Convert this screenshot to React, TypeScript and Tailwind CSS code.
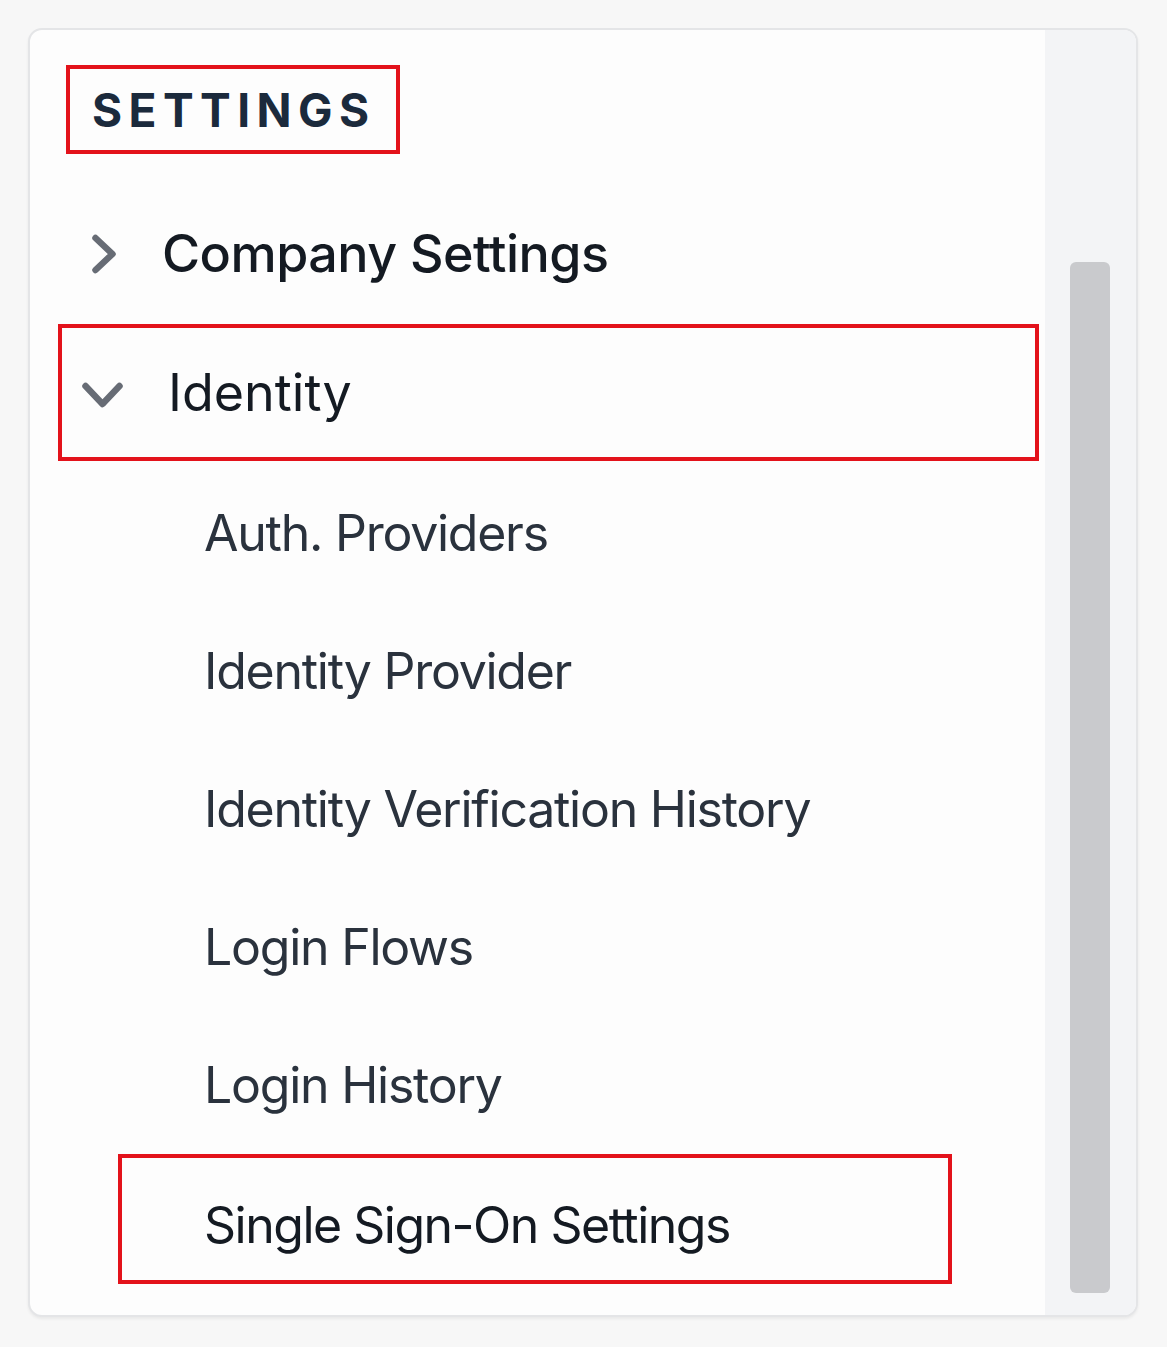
const subItems = [
  "Auth. Providers",
  "Identity Provider",
  "Identity Verification History",
  "Login Flows",
  "Login History",
];

function Chevron({ dir }: { dir: "right" | "down" }) {
  // thick rounded chevron, drawn on a 44x44 box
  const points =
    dir === "right" ? "15.5,6 32.5,22 15.5,38" : "5.5,15 22.5,33 39.5,15";
  return (
    <svg viewBox="0 0 44 44" className="h-[44px] w-[44px] shrink-0 text-[#676c75]">
      <polyline
        points={points}
        fill="none"
        stroke="currentColor"
        strokeWidth={6.5}
        strokeLinecap="round"
        strokeLinejoin="round"
      />
    </svg>
  );
}

export default function App() {
  return (
    <div
      className="min-h-screen bg-[#f7f7f7] pt-[28px] pl-[28px]"
      style={{ fontFamily: "Inter, 'Noto Sans', sans-serif" }}
    >
      <div className="flex h-[1289px] w-[1110px] overflow-hidden rounded-[14px] border-2 border-[#e4e5e7] bg-[#fdfdfd] shadow-[0_2px_3px_rgba(0,0,0,0.06)]">
        {/* nav column */}
        <div className="flex flex-1 flex-col pt-[35px]">
          <div className="ml-[36px] flex h-[89px] w-[334px] items-center border-4 border-[#e3121b] pl-[22px]">
            <span className="text-[46px] font-bold leading-none tracking-[0.14em] text-[#1b2a3c]">
              SETTINGS
            </span>
          </div>

          <div className="mt-[29px] flex h-[141px] items-center">
            <div className="ml-[50px]">
              <Chevron dir="right" />
            </div>
            <span className="ml-[38px] text-[52px] font-medium leading-none tracking-[-0.01em] text-[#141a22]">
              Company Settings
            </span>
          </div>

          <div className="ml-[28px] flex h-[137px] w-[981px] items-center border-4 border-[#e3121b]">
            <div className="ml-[18px]">
              <Chevron dir="down" />
            </div>
            <span className="ml-[44px] text-[52px] font-normal leading-none text-[#141a22]">
              Identity
            </span>
          </div>

          <div className="mt-[3px] flex flex-col">
            {subItems.map((label) => (
              <div key={label} className="flex h-[138px] items-center pl-[174px]">
                <span className="text-[50px] font-normal leading-none tracking-[-0.025em] text-[#2a323d]">
                  {label}
                </span>
              </div>
            ))}
          </div>

          <div className="ml-[88px] flex h-[130px] w-[834px] items-center border-4 border-[#e3121b] pl-[82px] pt-[11px]">
            <span className="text-[50px] font-normal leading-none tracking-[-0.03em] text-[#141a22]">
              Single Sign-On Settings
            </span>
          </div>
        </div>

        {/* scrollbar */}
        <div className="flex w-[91px] shrink-0 flex-col bg-[#f3f4f6] pb-[22px] pt-[232px]">
          <div className="ml-[25px] w-[40px] flex-1 rounded-[6px] bg-[#c9cacd]" />
        </div>
      </div>
    </div>
  );
}
